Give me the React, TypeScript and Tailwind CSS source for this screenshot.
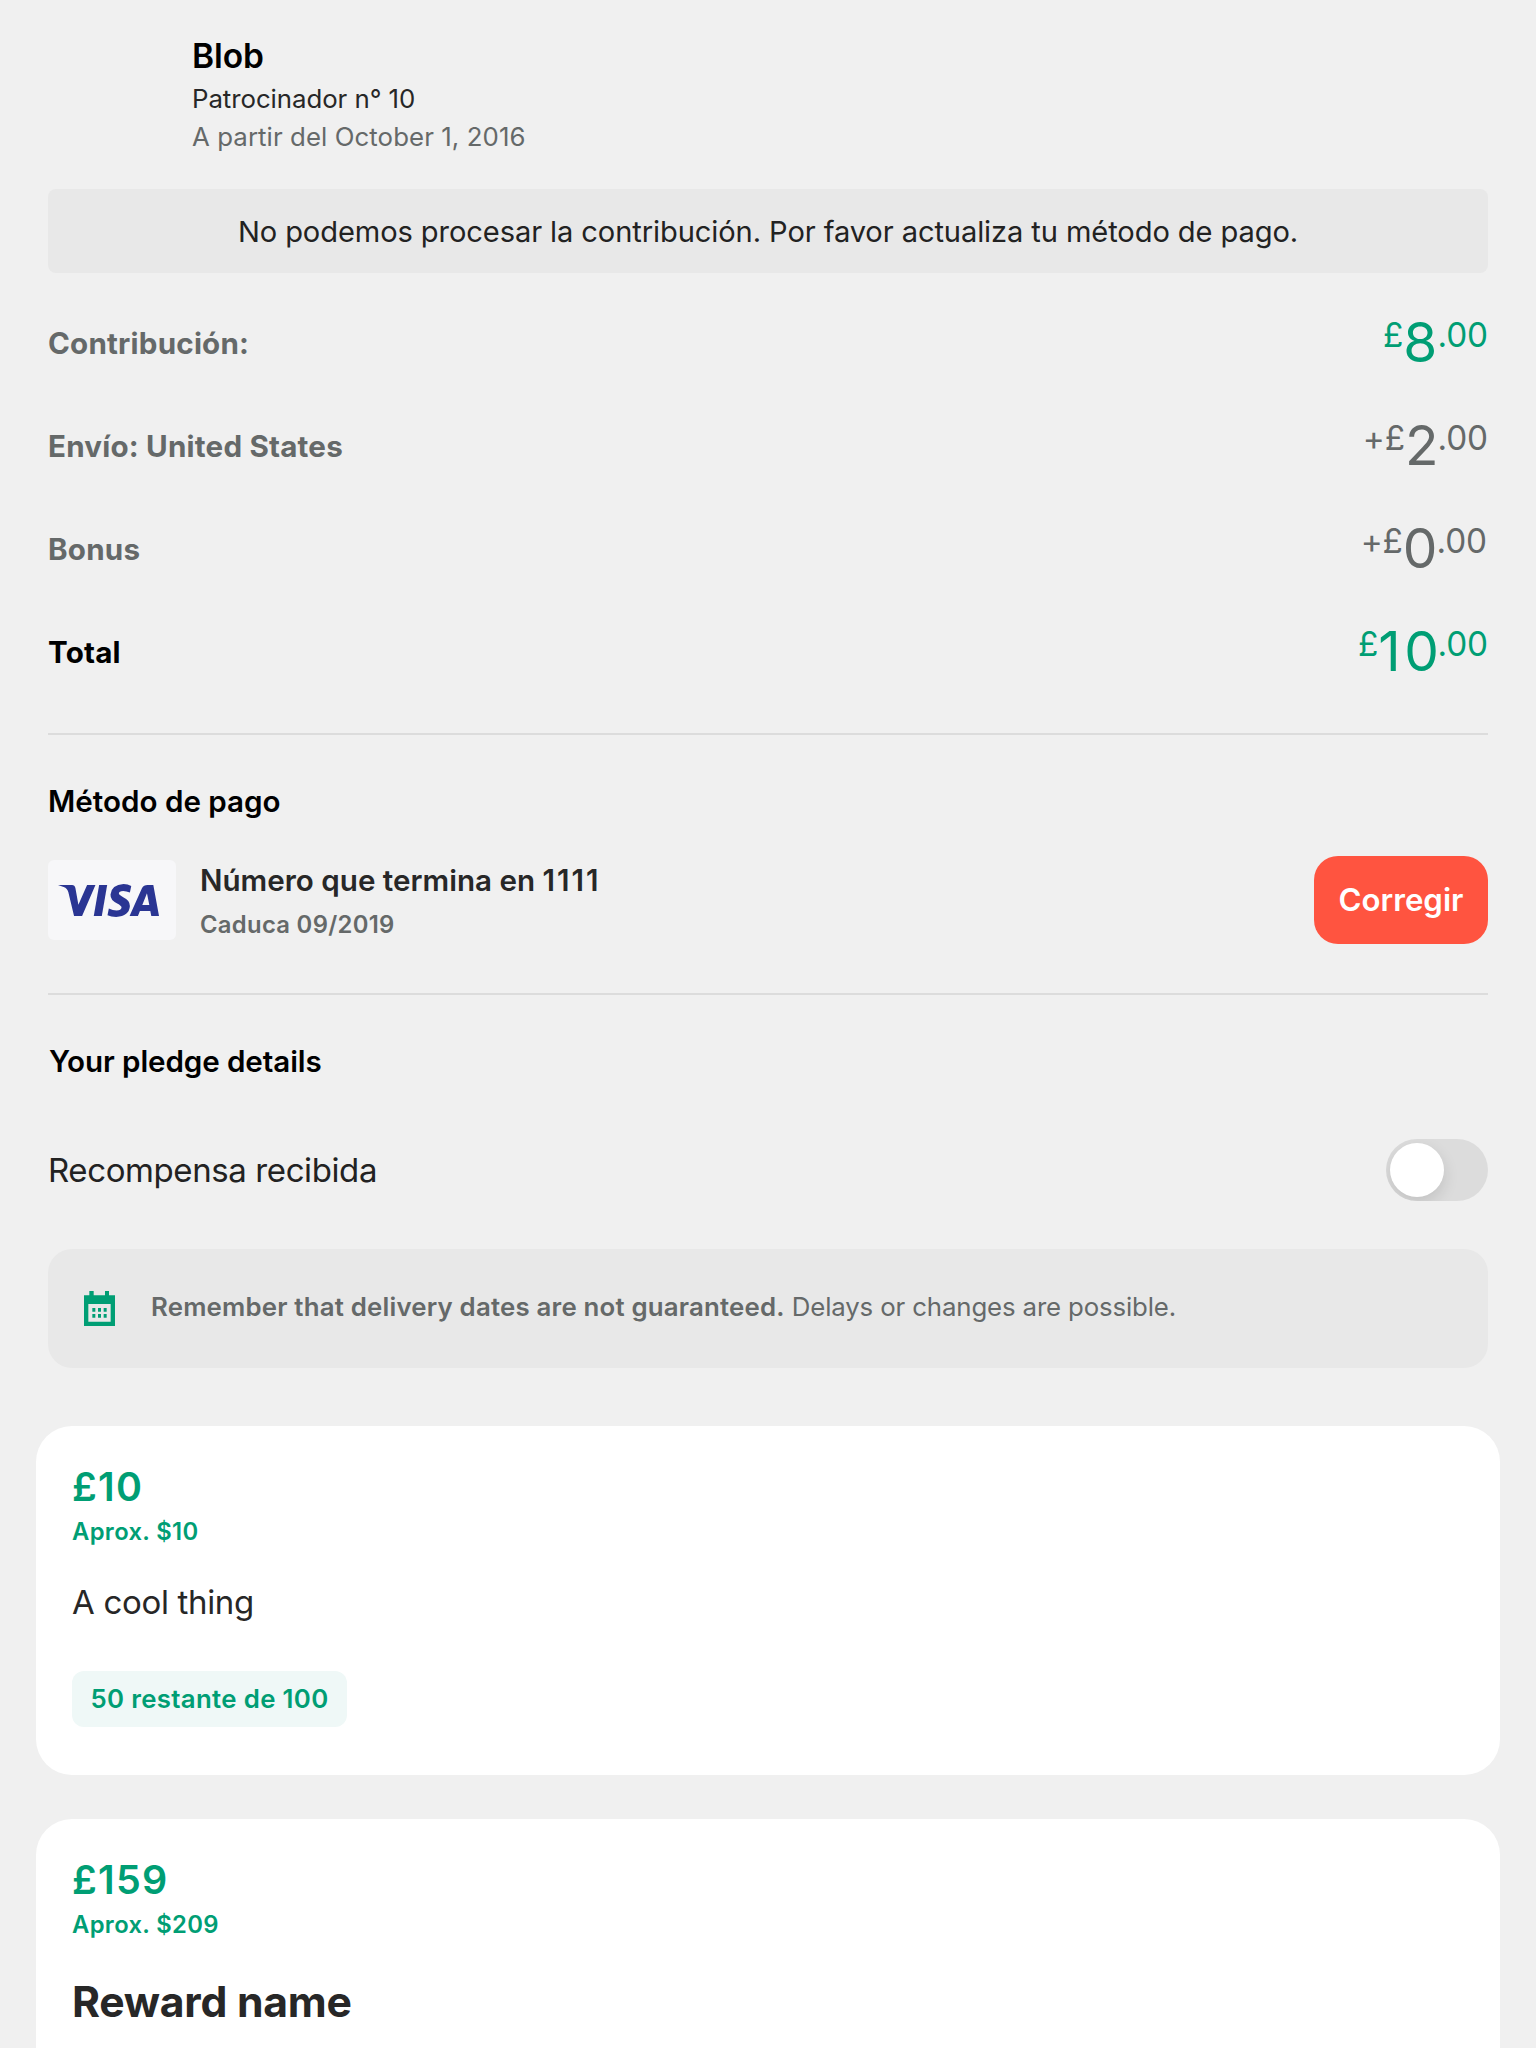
import React from "react";

type AmountProps = { prefix: string; whole: string; tone: string; fit: string; edge: string };

function Amount({ prefix, whole, tone, fit, edge }: AmountProps) {
  return (
    <div className={`-mt-[2px] flex items-start ${tone} ${edge}`}>
      <span className="text-[33.3px] leading-[40px] tracking-[-0.1px]">{prefix}</span>
      <span className={`text-[55px] leading-[54px] ${fit}`}>{whole}</span>
      <span className="text-[33.3px] leading-[40px] tracking-[-0.1px]">.00</span>
    </div>
  );
}

const amounts = [
  { label: "Contribución:", prefix: "£", whole: "8", fit: "tracking-[0.2px]", edge: "mr-0", tone: "text-[#009e74]", labelTone: "text-[#656969]" },
  { label: "Envío: United States", prefix: "+£", whole: "2", fit: "tracking-[-1px]", edge: "mr-0", tone: "text-[#656969]", labelTone: "text-[#656969]" },
  { label: "Bonus", prefix: "+£", whole: "0", fit: "tracking-[-1px]", edge: "mr-[1px]", tone: "text-[#656969]", labelTone: "text-[#656969]" },
  { label: "Total", prefix: "£", whole: "10", fit: "tracking-[3.6px] -mr-[5px]", edge: "mr-0", tone: "text-[#009e74]", labelTone: "text-black" },
];

function VisaLogo() {
  return (
    <svg viewBox="43 93 302 100" preserveAspectRatio="none" className="h-[33px] w-[101px]" fill="#2a3593" aria-label="Visa">
      <path d="M43 96H85Q93 96 95 105L104 156L130 96H155L115 190H91L74 118Q71 106 60 102Z" />
      <path d="M166 96H190L174 190H150Z" />
      <path d="M262 99L258 119Q247 114 238 114Q225 115 225 122Q225 126 238 133Q258 142 258 160Q256 191 217 193Q202 193 191 188L195 167Q207 173 218 173Q232 173 233 164Q233 159 220 152Q199 142 200 125Q203 95 239 93Q252 93 262 99Z" />
      <path fillRule="evenodd" d="M311 96H328L345 190H322L319 175H288L282 190H257L294 106Q299 96 311 96ZM309 121L295 157H316Z" />
    </svg>
  );
}

function CalendarIcon() {
  return (
    <svg viewBox="0 0 93 105" className="h-[35px] w-[31px]" fill="#009e74" aria-hidden="true">
      <path fillRule="evenodd" d="M16 0H29V13H63V0H75V13H93V105H0V13H16ZM13 39V92H80V39Z" />
      <path d="M25 51H34V62H25ZM42 51H51V62H42ZM59 51H68V62H59ZM25 69H34V80H25ZM42 69H51V80H42ZM59 69H68V80H59Z" />
    </svg>
  );
}

type RewardHeadProps = { price: string; approx: string };

function RewardHead({ price, approx }: RewardHeadProps) {
  return (
    <div className="text-[#009e74]">
      <div className="text-[39.4px] leading-[48px] font-semibold tracking-[1.3px]">{price}</div>
      <div className="mt-[6px] text-[23.8px] leading-[30px] font-semibold tracking-[0.35px]">{approx}</div>
    </div>
  );
}

export default function App() {
  return (
    <div className="h-[2048px] w-[1536px] overflow-hidden bg-[#f0f0f0] font-[Inter,sans-serif] whitespace-nowrap text-[#272727]">
      <main className="px-12 pt-9">
        <header className="pl-36">
          <div className="text-[33.5px] leading-[40px] font-semibold tracking-[-0.1px] text-black">Blob</div>
          <div className="mt-[4px] text-[25.8px] leading-[38px] tracking-[-0.05px]">Patrocinador n° 10</div>
          <div className="text-[25.8px] leading-[38px] tracking-[0.08px] text-[#656969]">
            A partir del October 1, 2016
          </div>
        </header>

        <div className="mt-[33px] flex h-[84px] items-center justify-center rounded-lg bg-[#e8e8e8] pt-[2px] text-[29.1px] leading-[36px] tracking-[-0.1px] text-[#222]">
          No podemos procesar la contribución. Por favor actualiza tu método de pago.
        </div>

        <section className="mt-[18px]">
          {amounts.map((a) => (
            <div key={a.label} className="flex h-[103px] items-center justify-between">
              <div className={`text-[29.6px] leading-[36px] font-bold tracking-[0.2px] ${a.labelTone}`}>{a.label}</div>
              <Amount prefix={a.prefix} whole={a.whole} tone={a.tone} fit={a.fit} edge={a.edge} />
            </div>
          ))}
        </section>

        <hr className="mt-[30px] h-[2px] border-0 bg-[#dcdcdc]" />

        <h2 className="mt-[48px] text-[29.6px] leading-[36px] font-semibold text-black">Método de pago</h2>
        <section className="mt-[37px] flex h-[88px] items-center">
          <div className="flex h-20 w-32 items-center justify-center rounded-md bg-[#f7f7f9] pr-[7px]">
            <VisaLogo />
          </div>
          <div className="ml-6 flex-1 pt-[4px]">
            <div className="text-[29.6px] leading-[40px] font-semibold">
              Número que termina en <span className="tracking-[2px]">1111</span>
            </div>
            <div className="mt-[5px] text-[23.8px] leading-[40px] font-semibold tracking-[0.32px] text-[#656969]">
              Caduca 09/2019
            </div>
          </div>
          <button className="flex h-[88px] w-[174px] items-center justify-center rounded-3xl bg-[#ff5440] text-[31.2px] leading-[40px] font-semibold text-white">
            Corregir
          </button>
        </section>

        <hr className="mt-[49px] h-[2px] border-0 bg-[#dcdcdc]" />

        <h2 className="mt-[48px] pl-px text-[29.6px] leading-[36px] font-semibold tracking-[-0.1px] text-black">
          Your pledge details
        </h2>
        <div className="mt-[60px] flex items-center justify-between">
          <div className="text-[33px] leading-[40px] tracking-[-0.4px] text-[#222]">Recompensa recibida</div>
          <div className="flex h-[62px] w-[102px] items-center overflow-hidden rounded-full bg-[#dcdcdc] pl-1">
            <div className="size-[54px] rounded-full bg-white shadow-[0_6px_16px_rgba(0,0,0,0.12)]" />
          </div>
        </div>

        <div className="mt-[48px] flex h-[119px] items-center rounded-3xl bg-[#e8e8e8] pl-9 text-[25.8px] leading-[32px] text-[#656969]">
          <CalendarIcon />
          <p className="-mt-[3px] ml-[36px]">
            <span className="font-semibold tracking-[0.2px]">Remember that delivery dates are not guaranteed.</span>
            <span className="tracking-[-0.14px]"> Delays or changes are possible.</span>
          </p>
        </div>
      </main>

      <section className="mt-[58px] flex flex-col gap-[44px] px-9">
        <article className="h-[349px] rounded-[36px] bg-white px-9 pt-[37px]">
          <RewardHead price="£10" approx="Aprox. $10" />
          <div className="mt-[35px] text-[33px] leading-[40px] tracking-[-0.32px]">A cool thing</div>
          <div className="mt-[49px] flex h-14 w-[275px] items-center justify-center rounded-xl bg-[#eff8f7] text-[25.8px] leading-[32px] font-semibold tracking-[0.33px] text-[#009e74]">
            50 restante de 100
          </div>
        </article>
        <article className="h-[300px] rounded-[36px] bg-white px-9 pt-[37px]">
          <RewardHead price="£159" approx="Aprox. $209" />
          <div className="mt-[36px] text-[42.7px] leading-[52px] font-bold tracking-[-0.25px]">Reward name</div>
        </article>
      </section>
    </div>
  );
}
